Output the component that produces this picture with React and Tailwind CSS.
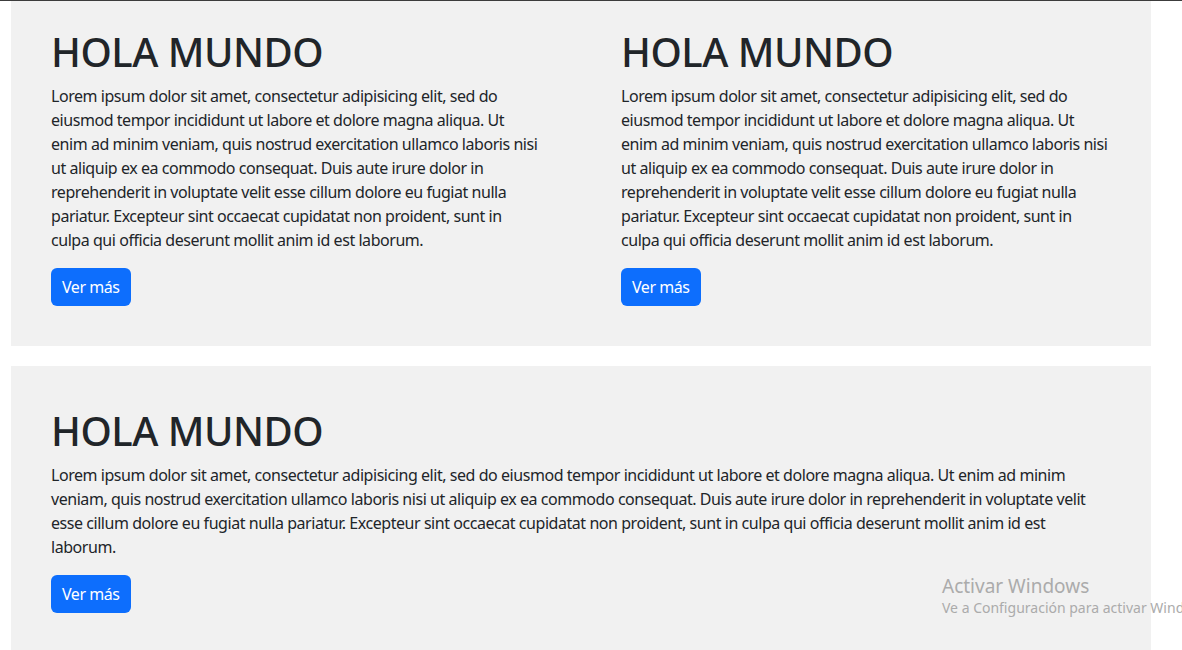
import React from 'react';

const LOREM =
  'Lorem ipsum dolor sit amet, consectetur adipisicing elit, sed do eiusmod tempor incididunt ut labore et dolore magna aliqua. Ut enim ad minim veniam, quis nostrud exercitation ullamco laboris nisi ut aliquip ex ea commodo consequat. Duis aute irure dolor in reprehenderit in voluptate velit esse cillum dolore eu fugiat nulla pariatur. Excepteur sint occaecat cupidatat non proident, sunt in culpa qui officia deserunt mollit anim id est laborum.';

function Block() {
  return (
    <div className="px-10">
      <h1 className="text-[40px] leading-[48px] font-medium mb-2 tracking-[-0.5px]">HOLA MUNDO</h1>
      <p className="text-base leading-6 mb-4">{LOREM}</p>
      <button className="bg-[#0d6efd] text-white text-base leading-6 px-[11px] py-[7px] rounded-md">Ver más</button>
    </div>
  );
}

export default function App() {
  return (
    <div
      className="relative min-h-[650px] bg-white text-[#212529] border-t border-[#3c3c3c] overflow-hidden tracking-[-0.45px]"
      style={{ fontFamily: '"Noto Sans", "Open Sans", sans-serif' }}
    >
      <div className="ml-[11px] w-[1140px]">
        {/* Two columns */}
        <div className="bg-[#f1f1f1] pt-[27px] pb-10 grid grid-cols-2">
          <Block />
          <Block />
        </div>

        {/* Full width */}
        <div className="bg-[#f1f1f1] mt-5 pt-[41px] pb-10">
          <Block />
        </div>
      </div>

      {/* Windows activation watermark */}
      <div className="absolute left-[942px] top-[573px] text-[#ababab] whitespace-nowrap tracking-normal">
        <div className="text-[19px] leading-6">Activar Windows</div>
        <div className="text-[14px] leading-5">Ve a Configuración para activar Windows.</div>
      </div>
    </div>
  );
}
